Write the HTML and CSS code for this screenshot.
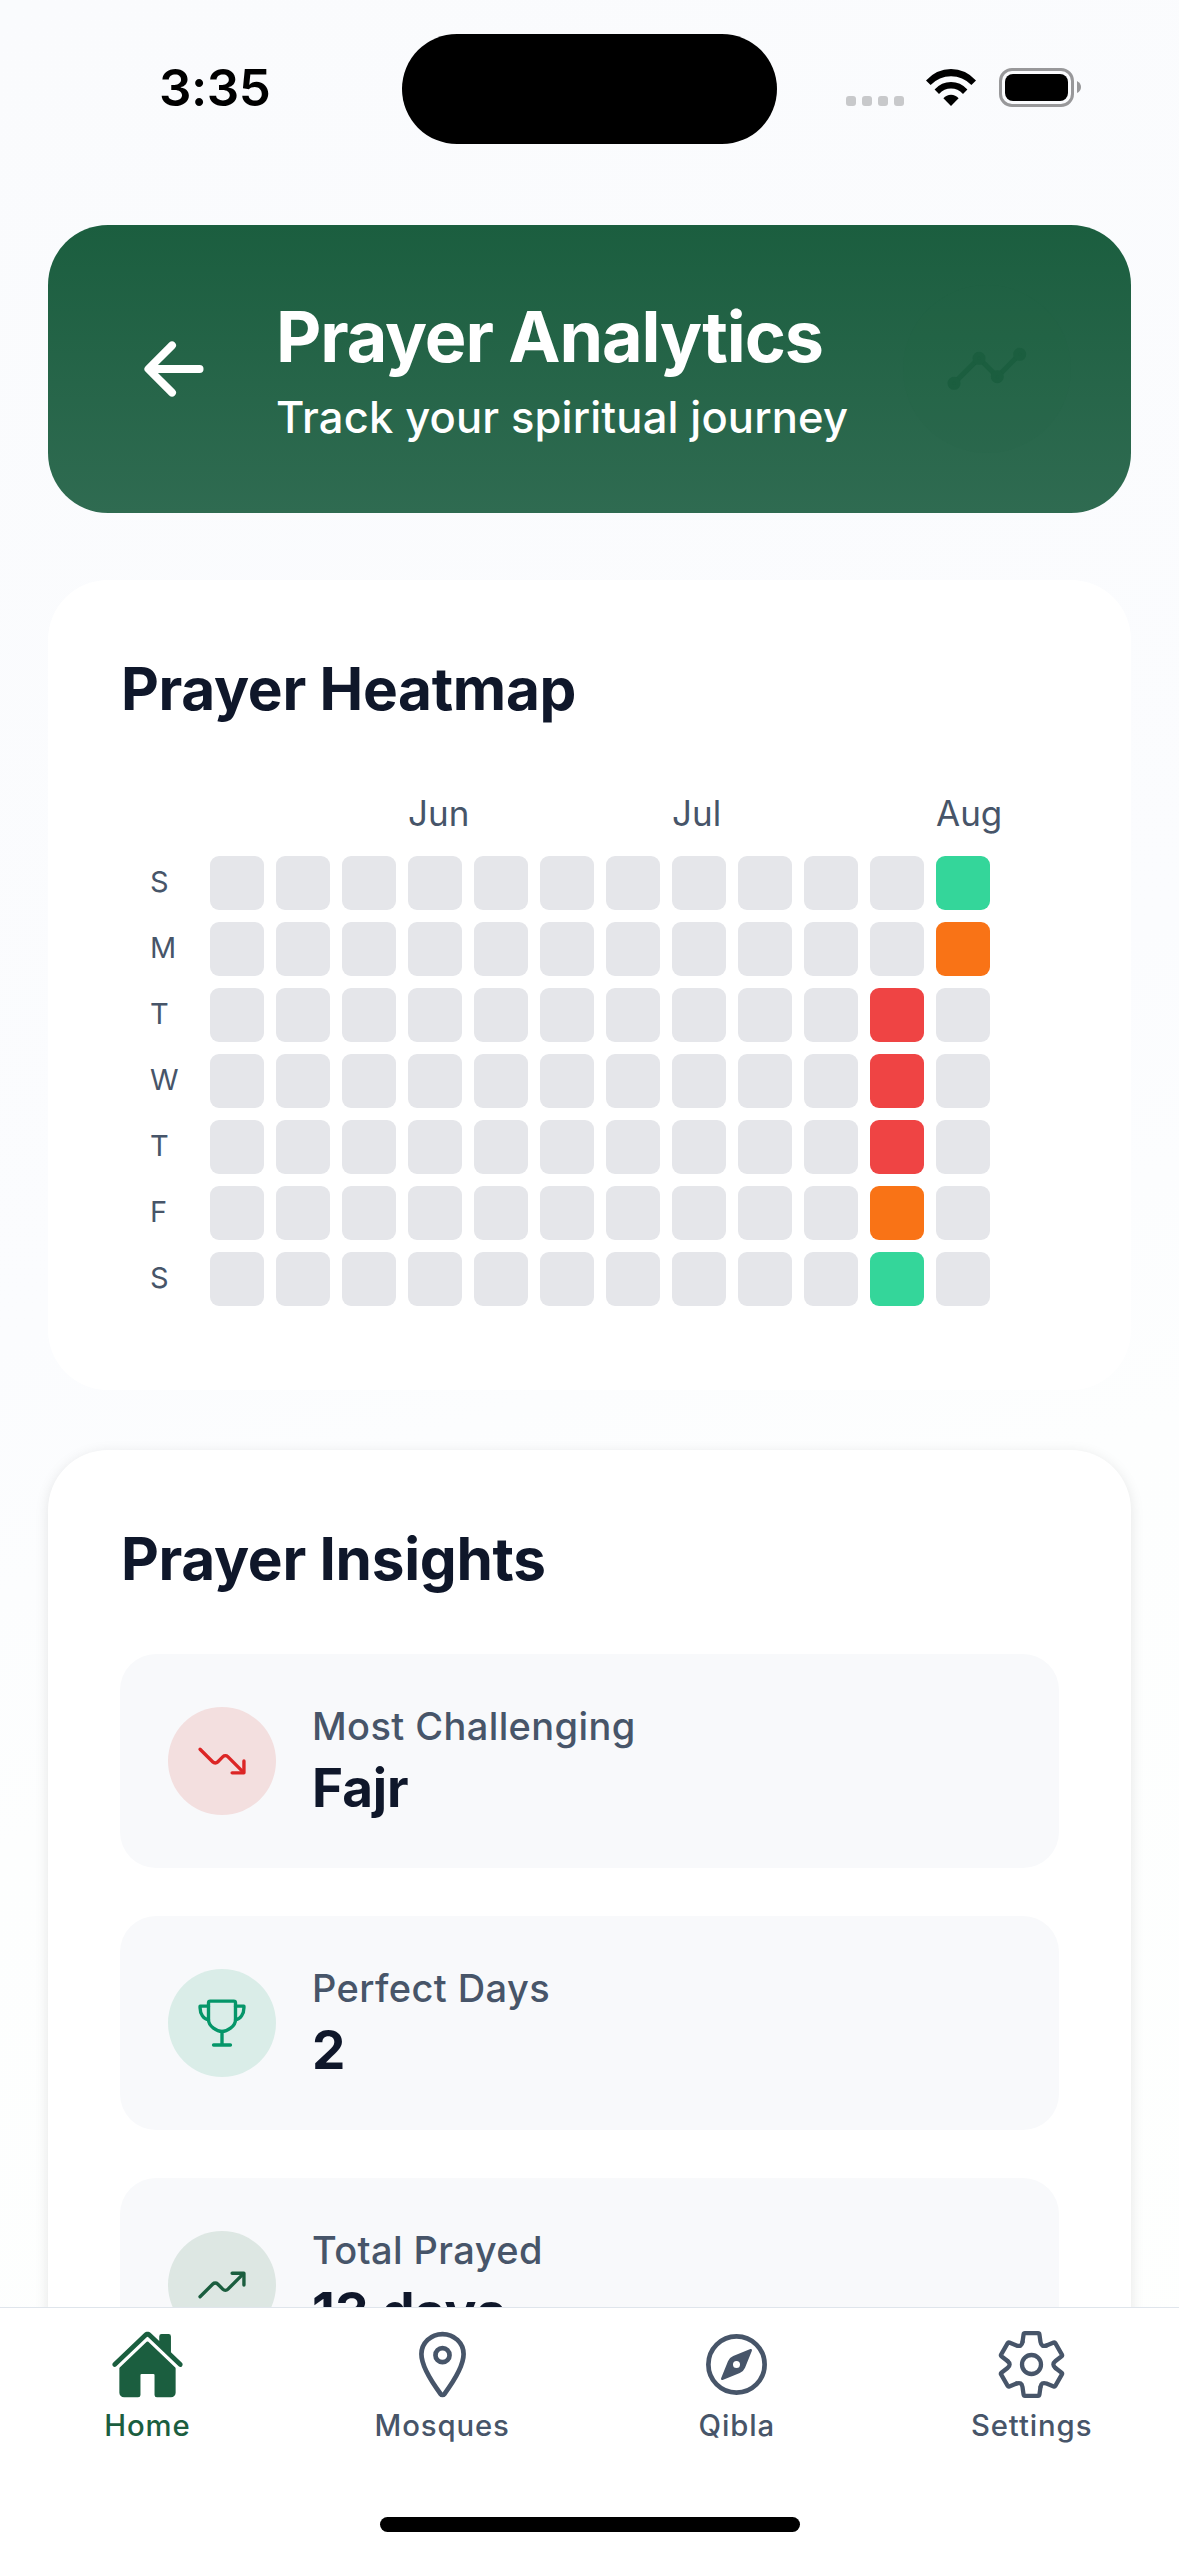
FILE: index.html
```html
<!DOCTYPE html>
<html lang="en">
<head>
<meta charset="utf-8">
<title>Prayer Analytics</title>
<link rel="stylesheet" href="styles.css">
</head>
<body>
<div class="app">
  <div class="status-bar">
    <span class="time">3:35</span>
    <span class="island"></span>
    <div class="status-icons">
      <span class="dots"><i></i><i></i><i></i><i></i></span>
      <svg class="wifi" viewBox="0 0 50 37" width="50" height="37">
        <path d="M25 37 17.4 29.3Q20.5 25.8 25 25.8T32.6 29.3Z"/>
        <path d="M8.6 20.4Q15.6 13 25 13T41.4 20.4L37 24.9Q31.8 19.6 25 19.6T13 24.9Z"/>
        <path d="M0 11.4Q10.6 0 25 0T50 11.4L45.4 16Q36.8 7.2 25 7.2T4.6 16Z"/>
      </svg>
      <span class="battery"><i></i></span>
      <svg class="battery-nub" viewBox="0 0 4 12" width="4" height="12"><path d="M0 0Q4 2 4 6T0 12Z"/></svg>
    </div>
  </div>

  <main class="content">
    <header class="hero">
      <svg class="back" viewBox="0 0 512 512"><path d="M244 400 100 256l144-144M120 256h292"/></svg>
      <div class="hero-text">
        <h1>Prayer Analytics</h1>
        <p>Track your spiritual journey</p>
      </div>
      <span class="hero-badge">
        <svg viewBox="0 0 80 44" width="80" height="44">
          <path d="M7 36.3 32 11.3 50.3 29.7 72.7 7.3"/>
          <circle cx="7" cy="36.3" r="4"/><circle cx="32" cy="11.3" r="4"/><circle cx="50.3" cy="29.7" r="4"/><circle cx="72.7" cy="7.3" r="4"/>
        </svg>
      </span>
    </header>

    <section class="card heatmap">
      <h2>Prayer Heatmap</h2>
      <div class="months"><span class="jun">Jun</span><span class="jul">Jul</span><span class="aug">Aug</span></div>
      <div class="grid">
        <b>S</b><i></i><i></i><i></i><i></i><i></i><i></i><i></i><i></i><i></i><i></i><i></i><i class="good"></i>
        <b>M</b><i></i><i></i><i></i><i></i><i></i><i></i><i></i><i></i><i></i><i></i><i></i><i class="fair"></i>
        <b>T</b><i></i><i></i><i></i><i></i><i></i><i></i><i></i><i></i><i></i><i></i><i class="poor"></i><i></i>
        <b>W</b><i></i><i></i><i></i><i></i><i></i><i></i><i></i><i></i><i></i><i></i><i class="poor"></i><i></i>
        <b>T</b><i></i><i></i><i></i><i></i><i></i><i></i><i></i><i></i><i></i><i></i><i class="poor"></i><i></i>
        <b>F</b><i></i><i></i><i></i><i></i><i></i><i></i><i></i><i></i><i></i><i></i><i class="fair"></i><i></i>
        <b>S</b><i></i><i></i><i></i><i></i><i></i><i></i><i></i><i></i><i></i><i></i><i class="good"></i><i></i>
      </div>
    </section>

    <section class="card insights">
      <h2>Prayer Insights</h2>
      <div class="insight">
        <span class="insight-icon red"><svg viewBox="0 0 512 512"><path d="M352 368h112V256"/><path d="M48 144l121.37 121.37a32 32 0 0045.26 0l50.74-50.74a32 32 0 0145.26 0L448 352"/></svg></span>
        <div><p class="label">Most Challenging</p><p class="value">Fajr</p></div>
      </div>
      <div class="insight">
        <span class="insight-icon teal"><svg viewBox="0 0 512 512"><path d="M176 464h160M256 464V336"/><path d="M384 224c0-50.64-.08-134.63-.12-160a16 16 0 00-16-16l-223.79.26a16 16 0 00-16 15.95c0 30.58-.13 129.17-.13 159.79 0 64.28 83 112 128 112S384 288.28 384 224z"/><path d="M128 96H48v16c0 55.22 33.55 112 80 112M384 96h80v16c0 55.22-33.55 112-80 112"/></svg></span>
        <div><p class="label">Perfect Days</p><p class="value">2</p></div>
      </div>
      <div class="insight">
        <span class="insight-icon green"><svg viewBox="0 0 512 512"><path d="M352 144h112v112"/><path d="M48 368l121.37-121.37a32 32 0 0145.26 0l50.74 50.74a32 32 0 0045.26 0L448 160"/></svg></span>
        <div><p class="label">Total Prayed</p><p class="value">13 days</p></div>
      </div>
    </section>
  </main>

  <nav class="tabs">
    <a class="tab active">
      <svg class="solid" viewBox="0 0 512 512"><path d="M261.56 101.28a8 8 0 00-11.06 0L66.4 277.15a8 8 0 00-2.47 5.79L63.9 448a32 32 0 0032 32H192a16 16 0 0016-16V328a8 8 0 018-8h80a8 8 0 018 8v136a16 16 0 0016 16h96.06a32 32 0 0032-32V282.94a8 8 0 00-2.47-5.79z"/><path d="M490.91 244.15l-74.8-71.56V64a16 16 0 00-16-16h-48a16 16 0 00-16 16v32l-57.92-55.38C272.77 35.14 264.71 32 256 32c-8.68 0-16.72 3.14-22.14 8.63l-212.7 203.5c-6.22 6-7 15.87-1.34 22.37A16 16 0 0043 267.56L250.5 69.28a8 8 0 0111.06 0l207.52 198.28a16 16 0 0022.59-.44c6.14-6.36 5.63-16.86-.76-22.97z"/></svg>
      <span>Home</span>
    </a>
    <a class="tab">
      <svg viewBox="0 0 512 512"><path d="M256 48c-79.5 0-144 61.39-144 137 0 87 96 224.87 131.25 272.49a15.77 15.77 0 0025.5 0C304 409.89 400 272.07 400 185c0-75.61-64.5-137-144-137z"/><circle cx="256" cy="192" r="48"/></svg>
      <span>Mosques</span>
    </a>
    <a class="tab">
      <svg viewBox="0 0 512 512"><circle cx="256" cy="256" r="192"/><path class="needle" d="M350.67 150.93l-117.2 46.88a64 64 0 00-35.66 35.66l-46.88 117.2a8 8 0 0010.4 10.4l117.2-46.88a64 64 0 0035.66-35.66l46.88-117.2a8 8 0 00-10.4-10.4zM256 280a24 24 0 1124-24 24 24 0 01-24 24z"/></svg>
      <span>Qibla</span>
    </a>
    <a class="tab">
      <svg class="gear" viewBox="-37.5 -37.5 75 75">
        <defs><path id="tooth" d="M-9-22.5-7.9-30.2Q-7.7-31.3-6.6-31.3H6.6Q7.7-31.3 7.9-30.2L9-22.5Q9.86-17.1 15-19.05"/></defs>
        <use href="#tooth"/><use href="#tooth" transform="rotate(60)"/><use href="#tooth" transform="rotate(120)"/><use href="#tooth" transform="rotate(180)"/><use href="#tooth" transform="rotate(240)"/><use href="#tooth" transform="rotate(300)"/>
        <circle r="9.5"/>
      </svg>
      <span>Settings</span>
    </a>
    <span class="home-indicator"></span>
  </nav>
</div>
</body>
</html>
```
FILE: styles.css
```css
* { box-sizing: border-box; margin: 0; padding: 0; }

body {
  width: 1179px;
  height: 2556px;
  overflow: hidden;
  font-family: Inter, "Liberation Sans", sans-serif;
  color: #0f172a;
}

svg { display: block; fill: none; stroke: currentColor; stroke-width: 32; stroke-linecap: round; stroke-linejoin: round; }

.app {
  display: flex;
  flex-direction: column;
  height: 2556px;
  background: linear-gradient(160deg, #fafbfd 0%, #fbfcfe 45%, #fdfefe 62%, #fefffe 100%);
}

/* Status bar */
.status-bar {
  display: grid;
  grid-template-columns: 402px 375px 402px;
  height: 177px;
  padding-top: 34px;
  color: #000;
}
.time {
  padding-left: 159px;
  font-size: 51px;
  font-weight: 600;
  line-height: 60px;
  margin-top: 24px;
  letter-spacing: -0.5px;
}
.island { height: 110px; border-radius: 55px; background: #000; }
.status-icons { display: flex; align-items: flex-start; padding: 34px 0 0 69px; }
.dots { display: flex; gap: 6px; margin-top: 28px; }
.dots i { width: 10px; height: 10px; border-radius: 3px; background: #c8c9cb; }
.wifi { fill: #000; stroke: none; margin: 1px 0 0 22px; }
.battery { width: 75px; height: 39px; margin-left: 23px; padding: 3px; border: 3px solid #98989a; border-radius: 13px; }
.battery i { display: block; height: 27px; border-radius: 8px; background: #000; }
.battery-nub { fill: #98989a; stroke: none; margin: 13px 0 0 3px; }

/* Scrolling content */
.content { flex: 1; min-height: 0; overflow: hidden; padding: 48px 48px 0; }

.hero {
  display: flex;
  align-items: center;
  height: 288px;
  padding: 0 60px 0 84px;
  border-radius: 60px;
  background: linear-gradient(180deg, #1b5e3f, #2f6b51);
  color: #fff;
}
.back { width: 84px; height: 84px; stroke-width: 48; }
.hero-text { flex: 1; padding-left: 60px; }
.hero h1 { font-size: 70px; font-weight: 700; line-height: 86px; letter-spacing: -1.1px; }
.hero p { font-size: 43.5px; font-weight: 500; line-height: 54px; margin-top: 10px; letter-spacing: 0.15px; white-space: nowrap; }
.hero-badge {
  display: flex;
  align-items: center;
  justify-content: center;
  width: 168px;
  height: 168px;
  border-radius: 50%;
  background: rgba(27, 94, 63, 0.06);
  color: #1b5e3f;
}
.hero-badge svg { stroke-width: 5; }

.card { border-radius: 60px; background: #fff; }
.card h2 { padding: 1px 0 0 1px; font-size: 58.5px; font-weight: 700; line-height: 72px; letter-spacing: -0.3px; }

.heatmap { height: 810px; margin-top: 67px; padding: 72px 72px 0; }
.months {
  display: grid;
  grid-template-columns: repeat(12, 54px);
  column-gap: 12px;
  margin: 66px 0 0 90px;
  font-size: 35px;
  line-height: 44px;
  color: #475569;
}
.jun { grid-column: 4; }
.jul { grid-column: 8; }
.aug { grid-column: 12; }
.grid {
  display: grid;
  grid-template-columns: 48px repeat(12, 54px);
  grid-auto-rows: 54px;
  gap: 12px;
  margin: 21px 0 0 30px;
}
.grid i { border-radius: 9px; background: #e5e6ea; }
.grid b { font-size: 29px; font-weight: 400; line-height: 52px; color: #475569; }
.grid .good { background: #34d69a; }
.grid .fair { background: #f97316; }
.grid .poor { background: #ef4444; }

/* Insights */
.insights {
  display: flex;
  flex-direction: column;
  gap: 48px;
  margin-top: 60px;
  padding: 72px 72px 72px;
  box-shadow: 0 3px 14px rgba(0, 0, 0, 0.1);
}
.insights h2 { margin-bottom: 11px; }
.insight {
  display: flex;
  align-items: center;
  gap: 36px;
  height: 214px;
  padding: 0 48px;
  border-radius: 36px;
  background: #f8f9fb;
}
.insight-icon { display: flex; align-items: center; justify-content: center; width: 108px; height: 108px; border-radius: 50%; }
.insight-icon svg { width: 54px; height: 54px; }
.red { color: #dc2626; background: #f3dfdf; }
.teal { color: #059669; background: #daede8; }
.green { color: #1b5e3f; background: #dde7e3; }
.label { font-size: 38px; font-weight: 500; line-height: 48px; letter-spacing: 0.4px; color: #475569; }
.value { font-size: 53px; font-weight: 700; line-height: 64px; margin-top: 6px; letter-spacing: -0.1px; }

/* Tab bar */
.tabs {
  display: grid;
  grid-template-columns: repeat(4, 1fr);
  grid-template-rows: 209px 15px;
  height: 249px;
  border-top: 1px solid #dfe5ec;
  background: #fff;
}
.tab { display: flex; flex-direction: column; align-items: center; padding-top: 19px; color: #475569; }
.tab svg { width: 75px; height: 75px; }
.tab span { margin-top: 4px; font-size: 29.3px; font-weight: 500; line-height: 40px; letter-spacing: 0.9px; }
.tab.active { color: #1b5e3f; }
.tab .solid, .tab .needle { fill: currentColor; stroke: none; }
.tab .gear { stroke-width: 4.3; }
.home-indicator { grid-column: 1 / -1; justify-self: center; width: 420px; height: 15px; border-radius: 8px; background: #000; }
```
